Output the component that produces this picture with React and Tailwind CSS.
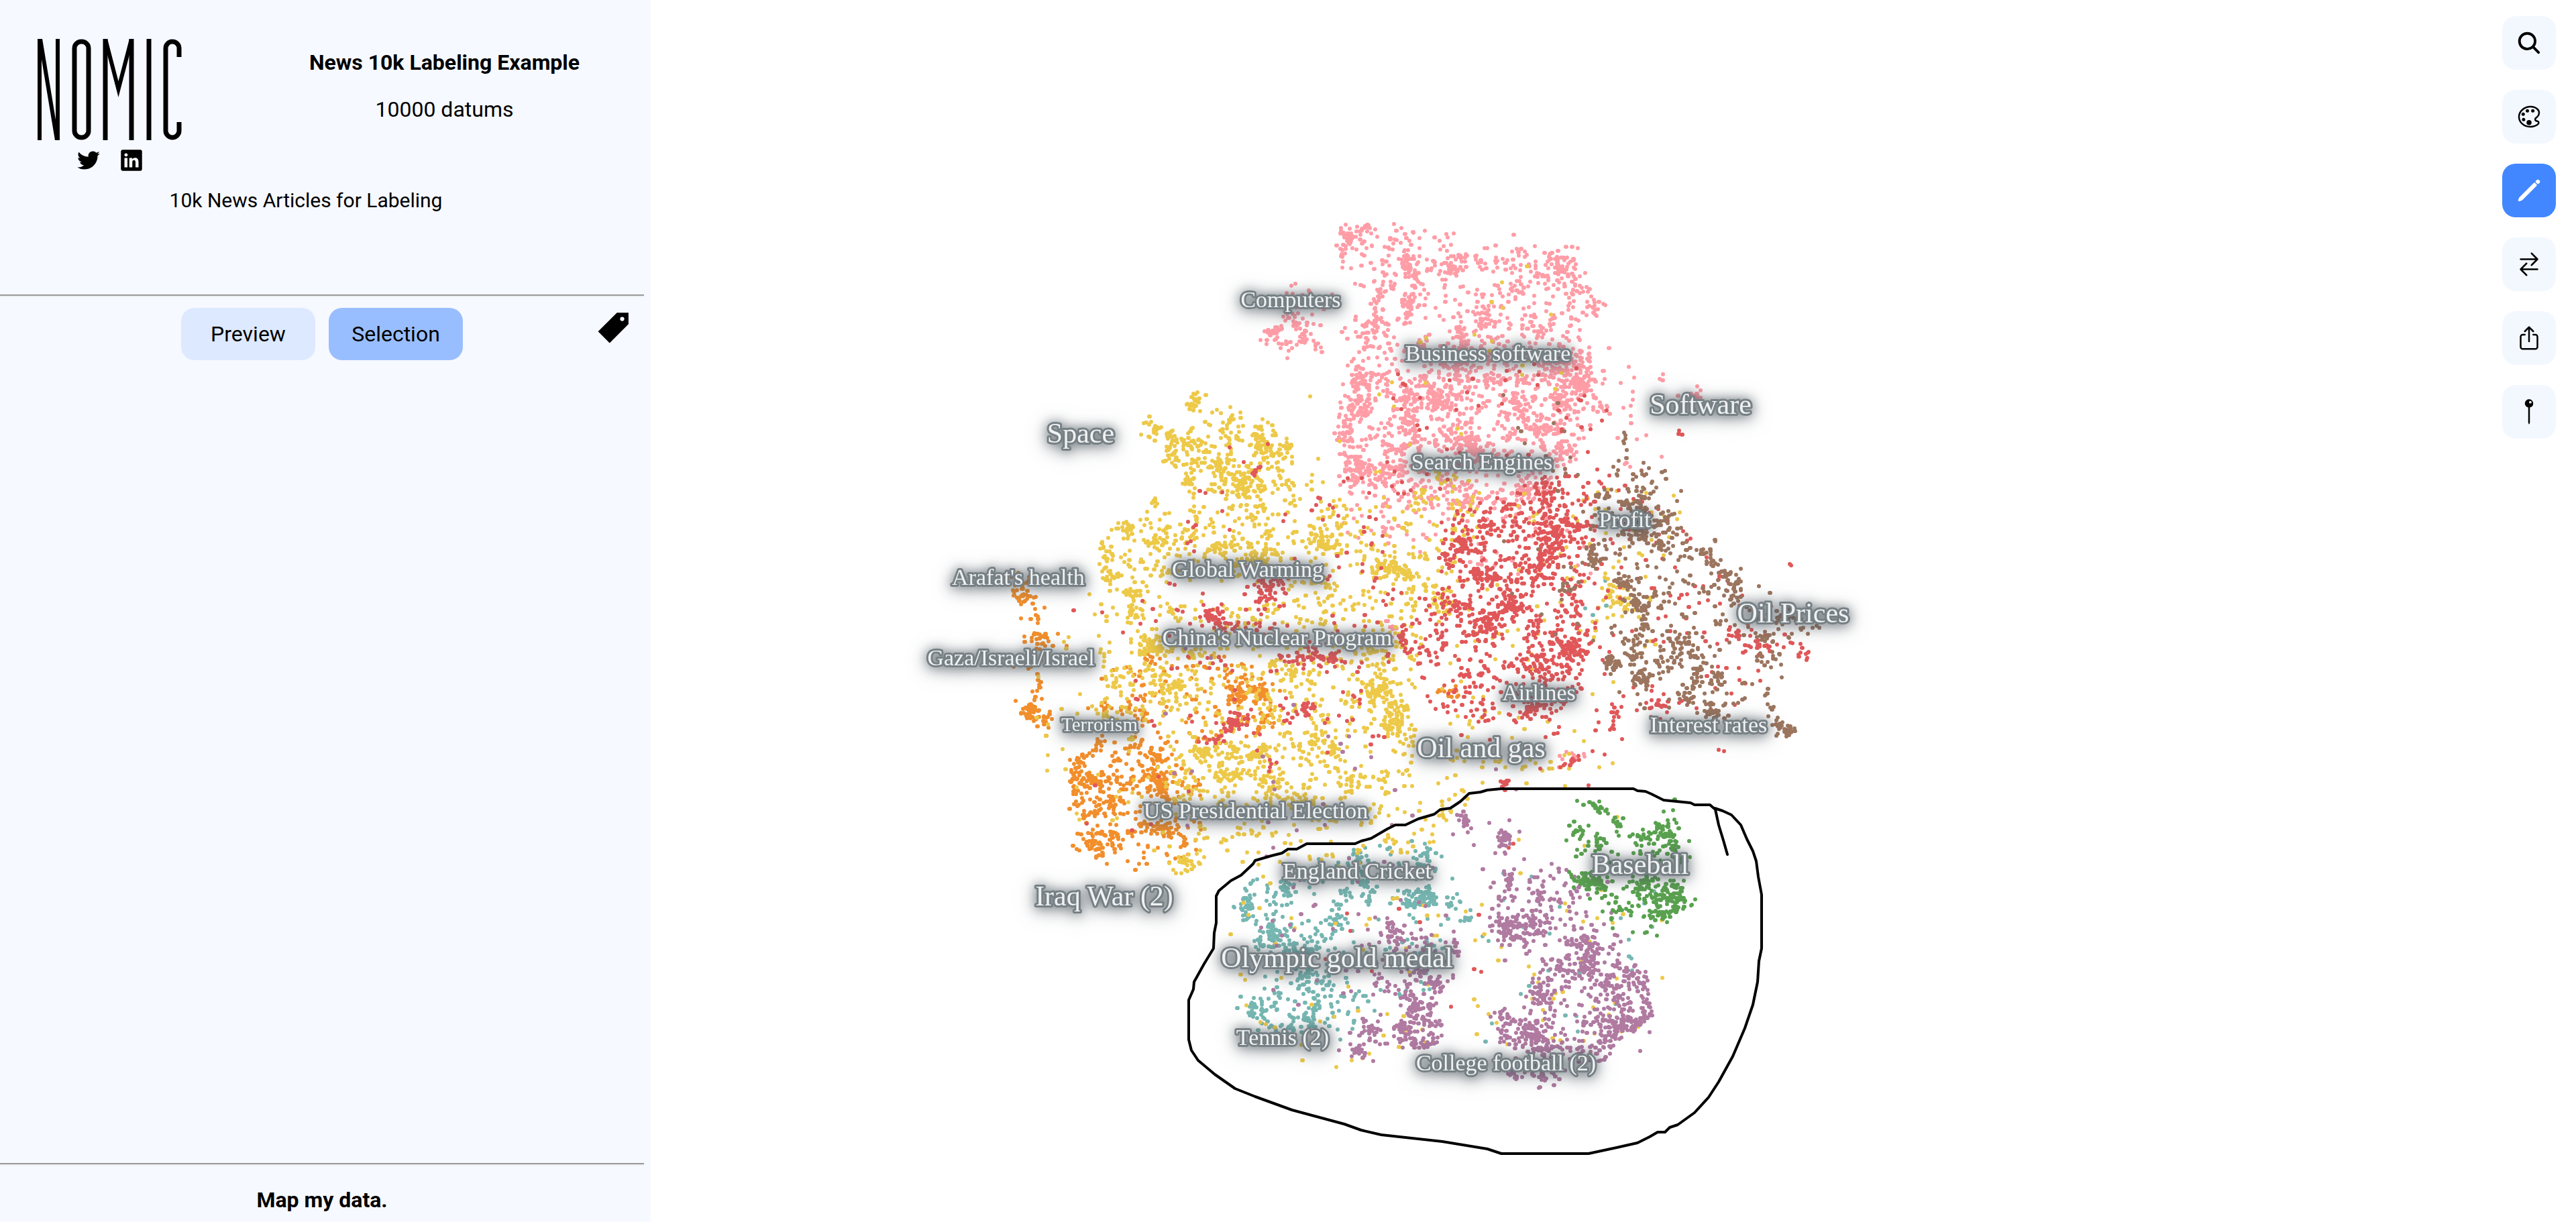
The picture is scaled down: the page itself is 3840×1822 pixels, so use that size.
import React from "react";
import {
  IoSearch,
  IoColorPaletteOutline,
  IoPencil,
  IoSwapHorizontal,
  IoShareOutline,
  IoPin,
  IoLogoTwitter,
  IoLogoLinkedin,
  IoPricetagSharp,
} from "react-icons/io5";

/* Topics: clusters are [x, y, spreadX, spreadY, count, x2?, y2?];
   regions are [count, [x, y], ...] polygons filled with clumpy points. */
const TOPICS = [
  {
    name: "teal",
    color: "#76b7b2",
    clusters: [
      [1859, 1349, 9, 14, 60], [1914, 1334, 9, 6, 30], [1898, 1395, 14, 13, 130], [1992, 1376, 6, 8, 30],
      [2032, 1311, 8, 14, 60], [2114, 1338, 14, 13, 90], [2133, 1334, 6, 10, 30], [2120, 1278, 8, 10, 40], [2011, 1334, 5, 4, 12],
      [1950, 1418, 14, 8, 40], [1944, 1456, 10, 6, 30], [1871, 1506, 9, 8, 50], [1901, 1498, 5, 9, 22],
      [1959, 1494, 8, 12, 40], [1950, 1521, 9, 5, 25], [1923, 1535, 12, 7, 50], [2029, 1276, 12, 6, 24],
      [2160, 1347, 6, 3, 8], [1972, 1460, 6, 8, 18], [2400, 905, 20, 25, 6],
    ],
    regions: [
      [250, [1850, 1320], [2020, 1260], [2150, 1270], [2190, 1370], [2130, 1480], [1990, 1560], [1860, 1520], [1840, 1400]],
      [30, [2200, 1250], [2500, 1300], [2460, 1540], [2200, 1560]],
    ],
  },
  {
    name: "orange",
    color: "#f28e2b",
    clusters: [
      [1520, 880, 7, 9, 50], [1536, 890, 5, 4, 14], [1544, 925, 4, 14, 18], [1554, 957, 11, 6, 40], [1534, 990, 11, 6, 30],
      [1546, 1025, 5, 12, 16], [1539, 1060, 8, 8, 70], [1561, 1073, 4, 7, 20], [1845, 1030, 8, 9, 80],
      [1881, 1033, 9, 7, 55], [1879, 1077, 8, 7, 22], [1719, 983, 10, 6, 18], [1607, 1148, 7, 13, 60],
      [1631, 1163, 14, 7, 65], [1724, 1163, 17, 11, 130], [1728, 1130, 10, 8, 35], [1694, 1070, 9, 9, 45],
      [1646, 1057, 8, 7, 18], [1660, 1200, 9, 12, 50], [1627, 1213, 8, 6, 22], [1743, 1233, 12, 7, 55],
      [1624, 1257, 10, 8, 50], [1660, 1247, 9, 8, 34], [1641, 1110, 8, 5, 20], [2159, 1033, 6, 6, 22], [1765, 1257, 4, 10, 14],
      [1680, 1110, 10, 10, 14],
    ],
    regions: [
      [190, [1595, 1130], [1700, 1110], [1790, 1160], [1790, 1290], [1700, 1295], [1620, 1270], [1590, 1200]],
      [110, [1630, 1010], [1780, 950], [1900, 1010], [1900, 1110], [1700, 1130]],
    ],
  },
  {
    name: "pink",
    color: "#ff9da7",
    clusters: [
      [2010, 357, 6, 8, 40], [2022, 350, 3, 3, 18, 2042, 336], [2102, 397, 7, 10, 50], [2168, 400, 8, 6, 45],
      [2325, 397, 11, 9, 80], [2097, 455, 5, 12, 40], [2209, 475, 9, 14, 55], [2178, 505, 6, 10, 35],
      [2175, 550, 12, 8, 70], [2118, 560, 5, 5, 60, 2150, 600], [2030, 573, 8, 12, 50], [2025, 610, 9, 7, 50],
      [2097, 633, 8, 12, 60], [2020, 685, 9, 12, 75], [2034, 710, 12, 8, 60], [2078, 670, 12, 6, 50], [2070, 705, 12, 10, 60],
      [2185, 655, 14, 7, 65], [2204, 677, 8, 10, 45], [2358, 565, 17, 12, 120], [2330, 600, 10, 14, 80],
      [2296, 633, 9, 14, 80], [2330, 673, 9, 8, 60], [2272, 733, 10, 9, 60], [2379, 458, 7, 9, 28],
      [2345, 430, 8, 12, 26], [2325, 547, 14, 6, 60], [2350, 530, 10, 8, 40], [2039, 505, 8, 12, 40], [2141, 600, 12, 8, 70],
      [2228, 565, 8, 5, 30], [2262, 590, 5, 5, 40, 2268, 625], [2262, 430, 12, 9, 30], [2240, 390, 10, 7, 14],
      [2052, 450, 6, 15, 35], [2050, 480, 8, 8, 20], [2110, 420, 4, 14, 30], [2008, 650, 8, 12, 40], [2050, 575, 12, 10, 20],
      [1900, 497, 10, 9, 40], [1945, 505, 10, 9, 24], [1927, 515, 12, 5, 26], [1930, 475, 12, 8, 26], [1935, 432, 9, 8, 12],
      [2100, 590, 10, 8, 40], [2170, 585, 16, 10, 30], [2160, 640, 8, 8, 30], [2205, 525, 20, 8, 40], [2530, 592, 14, 5, 30],
      [2485, 565, 16, 8, 8], [2433, 605, 3, 12, 8],
      [2425, 670, 20, 30, 14], [2072, 788, 8, 8, 12], [2076, 933, 6, 6, 12], [2341, 1128, 8, 7, 16], [2195, 745, 20, 10, 24],
      [2250, 800, 90, 30, 50], [2210, 835, 8, 6, 8],
    ],
    regions: [
      [350, [1996, 363], [2034, 333], [2100, 345], [2330, 380], [2392, 467], [2345, 513], [2030, 507], [2034, 467], [2000, 400]],
      [800, [2030, 507], [2345, 513], [2400, 600], [2350, 680], [2300, 740], [2150, 755], [1991, 735], [2000, 633], [2010, 567]],
      [24, [2000, 335], [2150, 330], [2330, 360], [2320, 400], [2100, 400]],
      [50, [1985, 740], [2320, 740], [2300, 810], [2000, 810]],
      [18, [1900, 420], [2000, 440], [2010, 520], [1920, 540]],
    ],
  },
  {
    name: "yellow",
    color: "#edc948",
    clusters: [
      [1782, 600, 5, 9, 38], [1719, 642, 7, 7, 40], [1743, 650, 5, 4, 18], [1772, 660, 14, 9, 60], [1881, 662, 10, 12, 65],
      [1920, 667, 5, 4, 18], [1745, 670, 5, 4, 26, 1745, 695], [1816, 690, 12, 9, 60], [1854, 725, 9, 16, 85],
      [1772, 717, 6, 12, 34], [1838, 625, 10, 6, 16], [1682, 787, 7, 8, 48], [1728, 807, 8, 9, 45], [1719, 750, 4, 8, 14],
      [1651, 837, 5, 16, 42], [1658, 862, 6, 5, 18], [1690, 880, 10, 6, 32], [1816, 817, 9, 7, 40], [1879, 826, 18, 12, 100],
      [1980, 810, 18, 8, 70], [2068, 845, 17, 10, 100], [2095, 858, 8, 4, 34], [1719, 963, 14, 8, 90], [1748, 1027, 9, 8, 70],
      [2077, 1070, 10, 17, 120], [2053, 1030, 10, 9, 60], [2058, 1003, 6, 12, 34], [1961, 1103, 11, 9, 46], [1987, 1120, 8, 7, 26],
      [1874, 1127, 12, 8, 60], [1825, 1157, 12, 7, 55], [1791, 1120, 13, 6, 50], [1898, 1167, 10, 10, 50], [2010, 1172, 6, 9, 28],
      [1772, 1285, 9, 6, 40], [1925, 1003, 5, 14, 32], [1940, 1190, 18, 7, 44], [2152, 897, 8, 11, 60], [2404, 897, 14, 10, 55],
      [2400, 873, 16, 8, 20], [2151, 710, 10, 6, 24], [2117, 743, 6, 8, 18], [1964, 800, 8, 12, 30], [1960, 865, 12, 10, 34],
      [1660, 1010, 8, 10, 26], [1700, 910, 5, 8, 14], [1780, 970, 20, 6, 30], [2200, 1060, 30, 60, 36], [1830, 1120, 10, 10, 26],
      [2050, 960, 18, 12, 60], [1650, 1060, 14, 8, 30], [1930, 745, 30, 20, 30],
    ],
    regions: [
      [190, [1740, 650], [1830, 610], [1900, 640], [1960, 720], [1880, 750], [1760, 740]],
      [340, [1740, 760], [1960, 740], [2200, 740], [2150, 900], [1980, 880], [1660, 860], [1680, 800]],
      [820, [1650, 870], [1800, 900], [2120, 880], [2110, 1100], [2100, 1190], [1980, 1235], [1790, 1260], [1720, 1150], [1640, 1050]],
      [80, [1760, 1240], [2200, 1180], [2120, 1280], [1780, 1290]],
      [55, [1820, 1290], [2100, 1240], [2440, 1200], [2520, 1380], [2440, 1540]],
      [55, [1820, 1290], [2440, 1540], [2260, 1600], [1900, 1590], [1820, 1440]],
      [55, [2130, 700], [2520, 740], [2480, 950]],
      [55, [2130, 700], [2480, 950], [2330, 1150], [2150, 1150]],
      [26, [1880, 560], [2300, 380], [2380, 600], [2000, 730]],
      [22, [1700, 780], [1560, 1200], [1530, 1000]],
      [24, [1590, 1120], [1780, 1160], [1780, 1290], [1570, 1220]],
      [30, [2100, 1130], [2400, 1120], [2420, 1170], [2160, 1190]],
    ],
  },
  {
    name: "red",
    color: "#e15759",
    clusters: [
      [2183, 810, 8, 11, 65], [2307, 803, 12, 22, 165], [2220, 865, 10, 9, 60], [2254, 900, 9, 9, 55], [2215, 933, 10, 9, 70],
      [2215, 933, 4, 4, 40, 2254, 898], [2341, 967, 12, 9, 100], [2292, 1000, 12, 12, 60], [2287, 1057, 8, 7, 46],
      [2360, 783, 6, 9, 26], [2622, 960, 10, 6, 34], [2588, 947, 8, 5, 16], [2685, 973, 8, 7, 16], [2243, 1168, 4, 6, 20],
      [2341, 1137, 8, 5, 16], [2409, 1067, 8, 14, 26], [2472, 1053, 12, 8, 28], [1806, 920, 8, 8, 55], [1822, 933, 8, 6, 36],
      [1870, 940, 10, 4, 16], [1893, 873, 14, 8, 70], [1879, 893, 6, 6, 20], [1956, 975, 12, 9, 60], [1985, 983, 8, 8, 30],
      [1917, 983, 8, 8, 18], [1947, 1057, 8, 6, 34], [1835, 1080, 8, 7, 46], [1842, 1078, 3, 3, 20, 1868, 1062],
      [1811, 1103, 8, 3, 16], [2090, 935, 3, 3, 30, 2098, 975], [2290, 850, 10, 14, 46], [2165, 900, 9, 9, 26],
      [2310, 1005, 8, 8, 20], [2300, 730, 12, 12, 36], [2340, 915, 8, 14, 20], [2200, 855, 10, 6, 24], [2288, 930, 8, 8, 20],
      [2669, 843, 1, 1, 2], [2502, 645, 3, 5, 5], [2558, 1122, 6, 8, 3],
    ],
    regions: [
      [680, [2140, 770], [2250, 730], [2370, 700], [2380, 800], [2360, 900], [2380, 1000], [2330, 1060], [2250, 1080], [2130, 1070], [2110, 1000], [2100, 900], [2150, 870]],
      [58, [2370, 680], [2500, 780], [2620, 900], [2360, 900]],
      [58, [2360, 900], [2620, 900], [2690, 950], [2560, 1080], [2400, 1080]],
      [170, [1840, 640], [2060, 720], [2110, 960], [2060, 1100], [1880, 1170], [1760, 1060], [1700, 900]],
      [56, [2060, 500], [2380, 520], [2420, 700], [2060, 740]],
      [16, [1600, 900], [1700, 900], [1800, 1260], [1600, 1280]],
      [14, [1850, 1400], [2160, 1280], [2300, 1180], [2200, 1520]],
      [24, [2120, 1000], [2420, 1020], [2380, 1180], [2180, 1130]],
    ],
  },
  {
    name: "brown",
    color: "#9c755f",
    clusters: [
      [2433, 755, 14, 9, 60], [2443, 797, 16, 9, 80], [2430, 775, 22, 9, 60], [2489, 777, 9, 10, 36], [2375, 827, 5, 10, 50],
      [2389, 737, 8, 6, 22], [2447, 737, 6, 9, 22], [2423, 870, 7, 7, 55], [2336, 877, 5, 4, 20], [2536, 820, 3, 4, 50, 2573, 860],
      [2575, 857, 7, 5, 30], [2590, 862, 5, 5, 40, 2583, 900], [2433, 890, 4, 4, 34, 2446, 905], [2448, 905, 4, 5, 26, 2455, 940],
      [2404, 990, 9, 6, 60], [2438, 978, 6, 6, 24], [2447, 1012, 9, 10, 70], [2506, 963, 9, 9, 60], [2525, 1010, 5, 14, 30],
      [2559, 1013, 8, 8, 46], [2554, 1060, 11, 8, 55], [2645, 1076, 4, 4, 50, 2670, 1093], [2637, 1050, 4, 16, 18],
      [2656, 917, 20, 12, 70], [2627, 947, 8, 8, 22], [2477, 813, 6, 8, 26], [2477, 987, 7, 7, 20], [2420, 640, 2, 2, 12, 2426, 690],
      [2450, 705, 12, 12, 20], [2412, 700, 8, 5, 8], [2385, 835, 8, 5, 16], [2540, 880, 10, 7, 14], [2433, 955, 5, 5, 10], [2515, 1040, 10, 5, 12],
      [2685, 940, 12, 8, 12],
    ],
    regions: [
      [230, [2420, 690], [2490, 760], [2560, 800], [2600, 900], [2690, 930], [2600, 1050], [2440, 1070], [2400, 950], [2385, 780]],
      [30, [2200, 580], [2380, 600], [2380, 1000], [2250, 960]],
    ],
  },
  {
    name: "purple",
    color: "#b07aa1",
    clusters: [
      [2178, 1210, 3, 3, 30, 2190, 1236], [2241, 1250, 6, 7, 44], [2247, 1317, 5, 10, 40], [2298, 1338, 6, 7, 24],
      [2248, 1387, 10, 11, 110], [2283, 1372, 10, 8, 44], [2371, 1430, 9, 15, 110], [2350, 1408, 9, 6, 34], [2398, 1468, 9, 8, 44],
      [2441, 1464, 8, 10, 32], [2301, 1483, 8, 9, 60], [2429, 1525, 13, 9, 110], [2398, 1540, 9, 12, 54], [2289, 1540, 10, 12, 90],
      [2313, 1560, 18, 9, 70], [2241, 1525, 7, 12, 42], [2301, 1602, 14, 7, 50], [2253, 1602, 8, 6, 26], [2114, 1500, 9, 12, 90],
      [2138, 1468, 9, 7, 44], [2114, 1448, 12, 6, 36], [2077, 1395, 7, 9, 30], [2088, 1535, 10, 7, 50], [2110, 1555, 14, 5, 46],
      [2136, 1535, 6, 14, 44], [2023, 1567, 6, 7, 40], [2041, 1537, 9, 9, 32], [2323, 1442, 6, 6, 22], [2355, 1565, 14, 6, 26],
      [2170, 1410, 4, 12, 18], [2455, 1500, 5, 14, 26], [2210, 1250, 30, 30, 14], [2350, 1330, 12, 14, 18],
    ],
    regions: [
      [330, [2230, 1340], [2300, 1330], [2420, 1400], [2470, 1500], [2400, 1580], [2300, 1600], [2230, 1560], [2290, 1450]],
      [120, [2060, 1380], [2170, 1400], [2150, 1560], [2030, 1560]],
      [59, [2220, 1260], [2420, 1310], [2400, 1400], [2220, 1400]],
      [46, [1870, 1320], [2180, 1220], [2180, 1400], [1900, 1540]],
      [26, [1600, 900], [1700, 900], [2160, 1180], [2100, 1240], [1800, 1300]],
    ],
  },
  {
    name: "green",
    color: "#59a14f",
    clusters: [
      [2483, 1242, 8, 13, 80], [2453, 1248, 8, 7, 26], [2386, 1255, 6, 8, 24], [2350, 1240, 8, 8, 30], [2383, 1206, 7, 5, 24],
      [2368, 1198, 5, 3, 10], [2410, 1227, 6, 6, 18], [2368, 1313, 14, 8, 90], [2453, 1313, 14, 9, 70], [2486, 1336, 13, 13, 90],
      [2506, 1346, 5, 8, 34], [2477, 1366, 8, 6, 34], [2404, 1357, 7, 7, 18], [2500, 1265, 6, 8, 22], [2446, 1391, 7, 3, 5],
    ],
    regions: [[120, [2350, 1240], [2410, 1260], [2500, 1220], [2515, 1340], [2480, 1370], [2400, 1365], [2360, 1320]]],
  },
];

function createRandom(seed) {
  let s = seed;
  return () => {
    s = (s + 0x6d2b79f5) | 0;
    let t = Math.imul(s ^ (s >>> 15), 1 | s);
    t = (t + Math.imul(t ^ (t >>> 7), 61 | t)) ^ t;
    return ((t ^ (t >>> 14)) >>> 0) / 4294967296;
  };
}

function inside(x, y, poly) {
  let hit = false;
  for (let i = 0, j = poly.length - 1; i < poly.length; j = i++) {
    const [xi, yi] = poly[i];
    const [xj, yj] = poly[j];
    if (yi > y !== yj > y && x < ((xj - xi) * (y - yi)) / (yj - yi) + xi) hit = !hit;
  }
  return hit;
}

function buildPath({ clusters, regions }, seed) {
  const rand = createRandom(seed);
  const gauss = () => rand() + rand() + rand() + rand() - 2;
  let d = "";
  const add = (x, y) => {
    d += `M${Math.round(x)} ${Math.round(y)}h${rand() < 0.25 ? 1 : 0}`;
  };
  for (const [x, y, sx, sy, n, x2 = x, y2 = y] of clusters) {
    for (let i = 0; i < n * 0.58; i++) {
      const t = rand();
      const halo = rand() < 0.3 ? 3 : 1.5;
      add(x + (x2 - x) * t + gauss() * sx * halo, y + (y2 - y) * t + gauss() * sy * halo);
    }
  }
  for (const [n, ...poly] of regions) {
    const xs = poly.map((p) => p[0]);
    const ys = poly.map((p) => p[1]);
    const [x0, x1, y0, y1] = [Math.min(...xs), Math.max(...xs), Math.min(...ys), Math.max(...ys)];
    let made = 0;
    while (made < n) {
      const x = x0 + rand() * (x1 - x0);
      const y = y0 + rand() * (y1 - y0);
      if (!inside(x, y, poly)) continue;
      const size = n < 60 ? 1 : 1 + Math.floor(rand() * rand() * 4);
      for (let k = 0; k < size; k++, made++) add(x + (k ? gauss() * 14 : 0), y + (k ? gauss() * 14 : 0));
    }
  }
  return d;
}

const LAYERS = TOPICS.map((t, i) => ({ name: t.name, color: t.color, d: buildPath(t, 97 + i * 31) }));

const LABELS = [
  ["Computers", 1924, 458, "md"],
  ["Business software", 2218, 538, "md"],
  ["Search Engines", 2209, 700, "md"],
  ["Software", 2535, 617, "lg"],
  ["Space", 1611, 660, "lg"],
  ["Profit", 2422, 786, "md"],
  ["Arafat's health", 1518, 872, "md"],
  ["Global Warming", 1860, 860, "md"],
  ["Oil Prices", 2673, 928, "lg"],
  ["China's Nuclear Program", 1904, 962, "md"],
  ["Gaza/Israeli/Israel", 1507, 992, "md"],
  ["Airlines", 2294, 1044, "md"],
  ["Interest rates", 2547, 1092, "md"],
  ["Terrorism", 1639, 1090, "sm"],
  ["Oil and gas", 2208, 1129, "lg"],
  ["US Presidential Election", 1872, 1220, "md"],
  ["Baseball", 2445, 1303, "lg"],
  ["England Cricket", 2023, 1310, "md"],
  ["Iraq War (2)", 1646, 1350, "lg"],
  ["Olympic gold medal", 1993, 1442, "lg"],
  ["Tennis (2)", 1912, 1558, "md"],
  ["College football (2)", 2245, 1596, "md"],
];

const LABEL_SIZE = { sm: "text-[29px]", md: "text-[34px]", lg: "text-[42px]" };

const LASSO =
  "2575,1274 2569,1253 2562,1230 2557,1207 2549,1200 2526,1200 2520,1197 2480,1193 2462,1184 2453,1180 2441,1179 2435,1176 2238,1176 2217,1178 2207,1181 2190,1183 2177,1195 2162,1205 2147,1207 2138,1214 2114,1221 2095,1230 2080,1230 2068,1236 2044,1250 2029,1254 2020,1258 1948,1258 1933,1266 1920,1266 1911,1272 1895,1276 1871,1283 1868,1288 1850,1305 1835,1313 1817,1328 1813,1336 1813,1376 1810,1391 1809,1414 1795,1437 1780,1464 1779,1475 1772,1491 1772,1550 1776,1566 1786,1581 1811,1602 1841,1623 1871,1635 1926,1655 2004,1676 2029,1685 2059,1692 2150,1702 2217,1713 2238,1720 2368,1720 2410,1711 2441,1704 2459,1695 2471,1688 2482,1688 2489,1681 2501,1677 2526,1659 2547,1636 2562,1613 2583,1575 2601,1533 2613,1498 2620,1464 2622,1433 2626,1414 2626,1334 2621,1307 2618,1284 2613,1269 2604,1251 2595,1230 2581,1215 2568,1209 2556,1205";

function TopicMap() {
  return (
    <svg viewBox="970 0 2870 1822" className="block h-full w-full" role="img" aria-label="Topic map">
      {LAYERS.map((l) => (
        <path key={l.name} d={l.d} stroke={l.color} strokeWidth="6" strokeLinecap="round" fill="none" />
      ))}
      <polyline points={LASSO} fill="none" stroke="#000" strokeWidth="4" strokeLinejoin="round" strokeLinecap="round" />
      {LABELS.map(([text, x, y, size]) => (
        <text
          key={text}
          x={x}
          y={y}
          textAnchor="middle"
          className={`${LABEL_SIZE[size]} fill-[#f0f1f2] stroke-[#768085] stroke-[6px] font-['Liberation_Serif',serif] [paint-order:stroke] [stroke-linejoin:round] [filter:drop-shadow(0_0_8px_rgba(70,80,88,0.55))_drop-shadow(0_4px_12px_rgba(70,80,88,0.5))]`}
        >
          {text}
        </text>
      ))}
    </svg>
  );
}

function Logo() {
  return (
    <svg viewBox="0 0 215 151" className="h-[151px] w-[215px]" role="img" aria-label="Nomic" fill="none" stroke="#000" strokeWidth="7">
      <line x1="3" y1="0" x2="3" y2="151" strokeWidth="6" />
      <line x1="30" y1="0" x2="30" y2="151" strokeWidth="6" />
      <line x1="4" y1="0" x2="29" y2="151" strokeWidth="6" />
      <rect x="55" y="4" width="21" height="143" rx="10" />
      <line x1="101" y1="0" x2="101" y2="151" />
      <line x1="140" y1="0" x2="140" y2="151" />
      <polyline points="101,0 120.5,75 140,0" strokeWidth="6" />
      <line x1="166" y1="0" x2="166" y2="151" />
      <path d="M211 27V14a10 10 0 0 0-20 0v123a10 10 0 0 0 20 0v-13" />
    </svg>
  );
}

const TOOLS = [
  ["Search", IoSearch],
  ["Color", IoColorPaletteOutline],
  ["Lasso select", IoPencil],
  ["Swap", IoSwapHorizontal],
  ["Share", IoShareOutline],
  ["Pin", IoPin],
];

function Divider() {
  return <hr className="mr-[10px] border-t-2 border-b-2 border-t-[#9a9a9a] border-b-[#eeeeee]" />;
}

export default function App() {
  const active = "Lasso select";
  return (
    <div className="flex h-screen bg-white font-[Roboto,sans-serif] text-[32px] leading-10 text-black">
      <aside className="box-content flex w-1/4 shrink-0 flex-col bg-[#f6f9ff] pr-[10px] [&_hr]:mr-0">
        <header className="flex gap-[38px] pt-[58px]">
          <div className="flex w-[327px] shrink-0 flex-col items-center gap-3">
            <Logo />
            <div className="flex gap-7">
              <a href="#twitter" aria-label="Twitter">
                <IoLogoTwitter className="size-9" />
              </a>
              <a href="#linkedin" aria-label="LinkedIn">
                <IoLogoLinkedin className="size-9" />
              </a>
            </div>
          </div>
          <div className="flex flex-1 flex-col items-center gap-[30px] pt-[15px]">
            <h1 className="font-bold">News 10k Labeling Example</h1>
            <p>10000 datums</p>
          </div>
        </header>
        <p className="mt-[22px] mr-12 mb-[120px] text-center text-[30px]">10k News Articles for Labeling</p>
        <Divider />
        <div className="grid grid-cols-[1fr_auto_1fr] pt-4">
          <div className="col-start-2 flex gap-5">
            <button type="button" className="h-[78px] w-[200px] rounded-[20px] bg-[#dde9ff]">
              Preview
            </button>
            <button type="button" className="h-[78px] w-[200px] rounded-[20px] bg-[#99beff]">
              Selection
            </button>
          </div>
          <button type="button" aria-label="Label selection" className="mr-5 self-start justify-self-end pt-1">
            <IoPricetagSharp className="size-[50px]" />
          </button>
        </div>
        <footer className="mt-auto">
          <Divider />
          <p className="pt-[31px] pb-[13px] text-center font-bold">
            <a href="#map">Map my data.</a>
          </p>
        </footer>
      </aside>
      <main className="relative min-w-0 flex-1">
        <TopicMap />
        <nav aria-label="Map tools" className="absolute top-6 right-[30px] flex flex-col gap-[30px]">
          {TOOLS.map(([name, Icon]) => (
            <button
              key={name}
              type="button"
              aria-label={name}
              className={`flex size-20 items-center justify-center rounded-[20px] ${
                name === active ? "bg-[#4287ff] text-white" : "bg-[#f3f8ff]"
              }`}
            >
              <Icon className="size-10" />
            </button>
          ))}
        </nav>
      </main>
    </div>
  );
}
